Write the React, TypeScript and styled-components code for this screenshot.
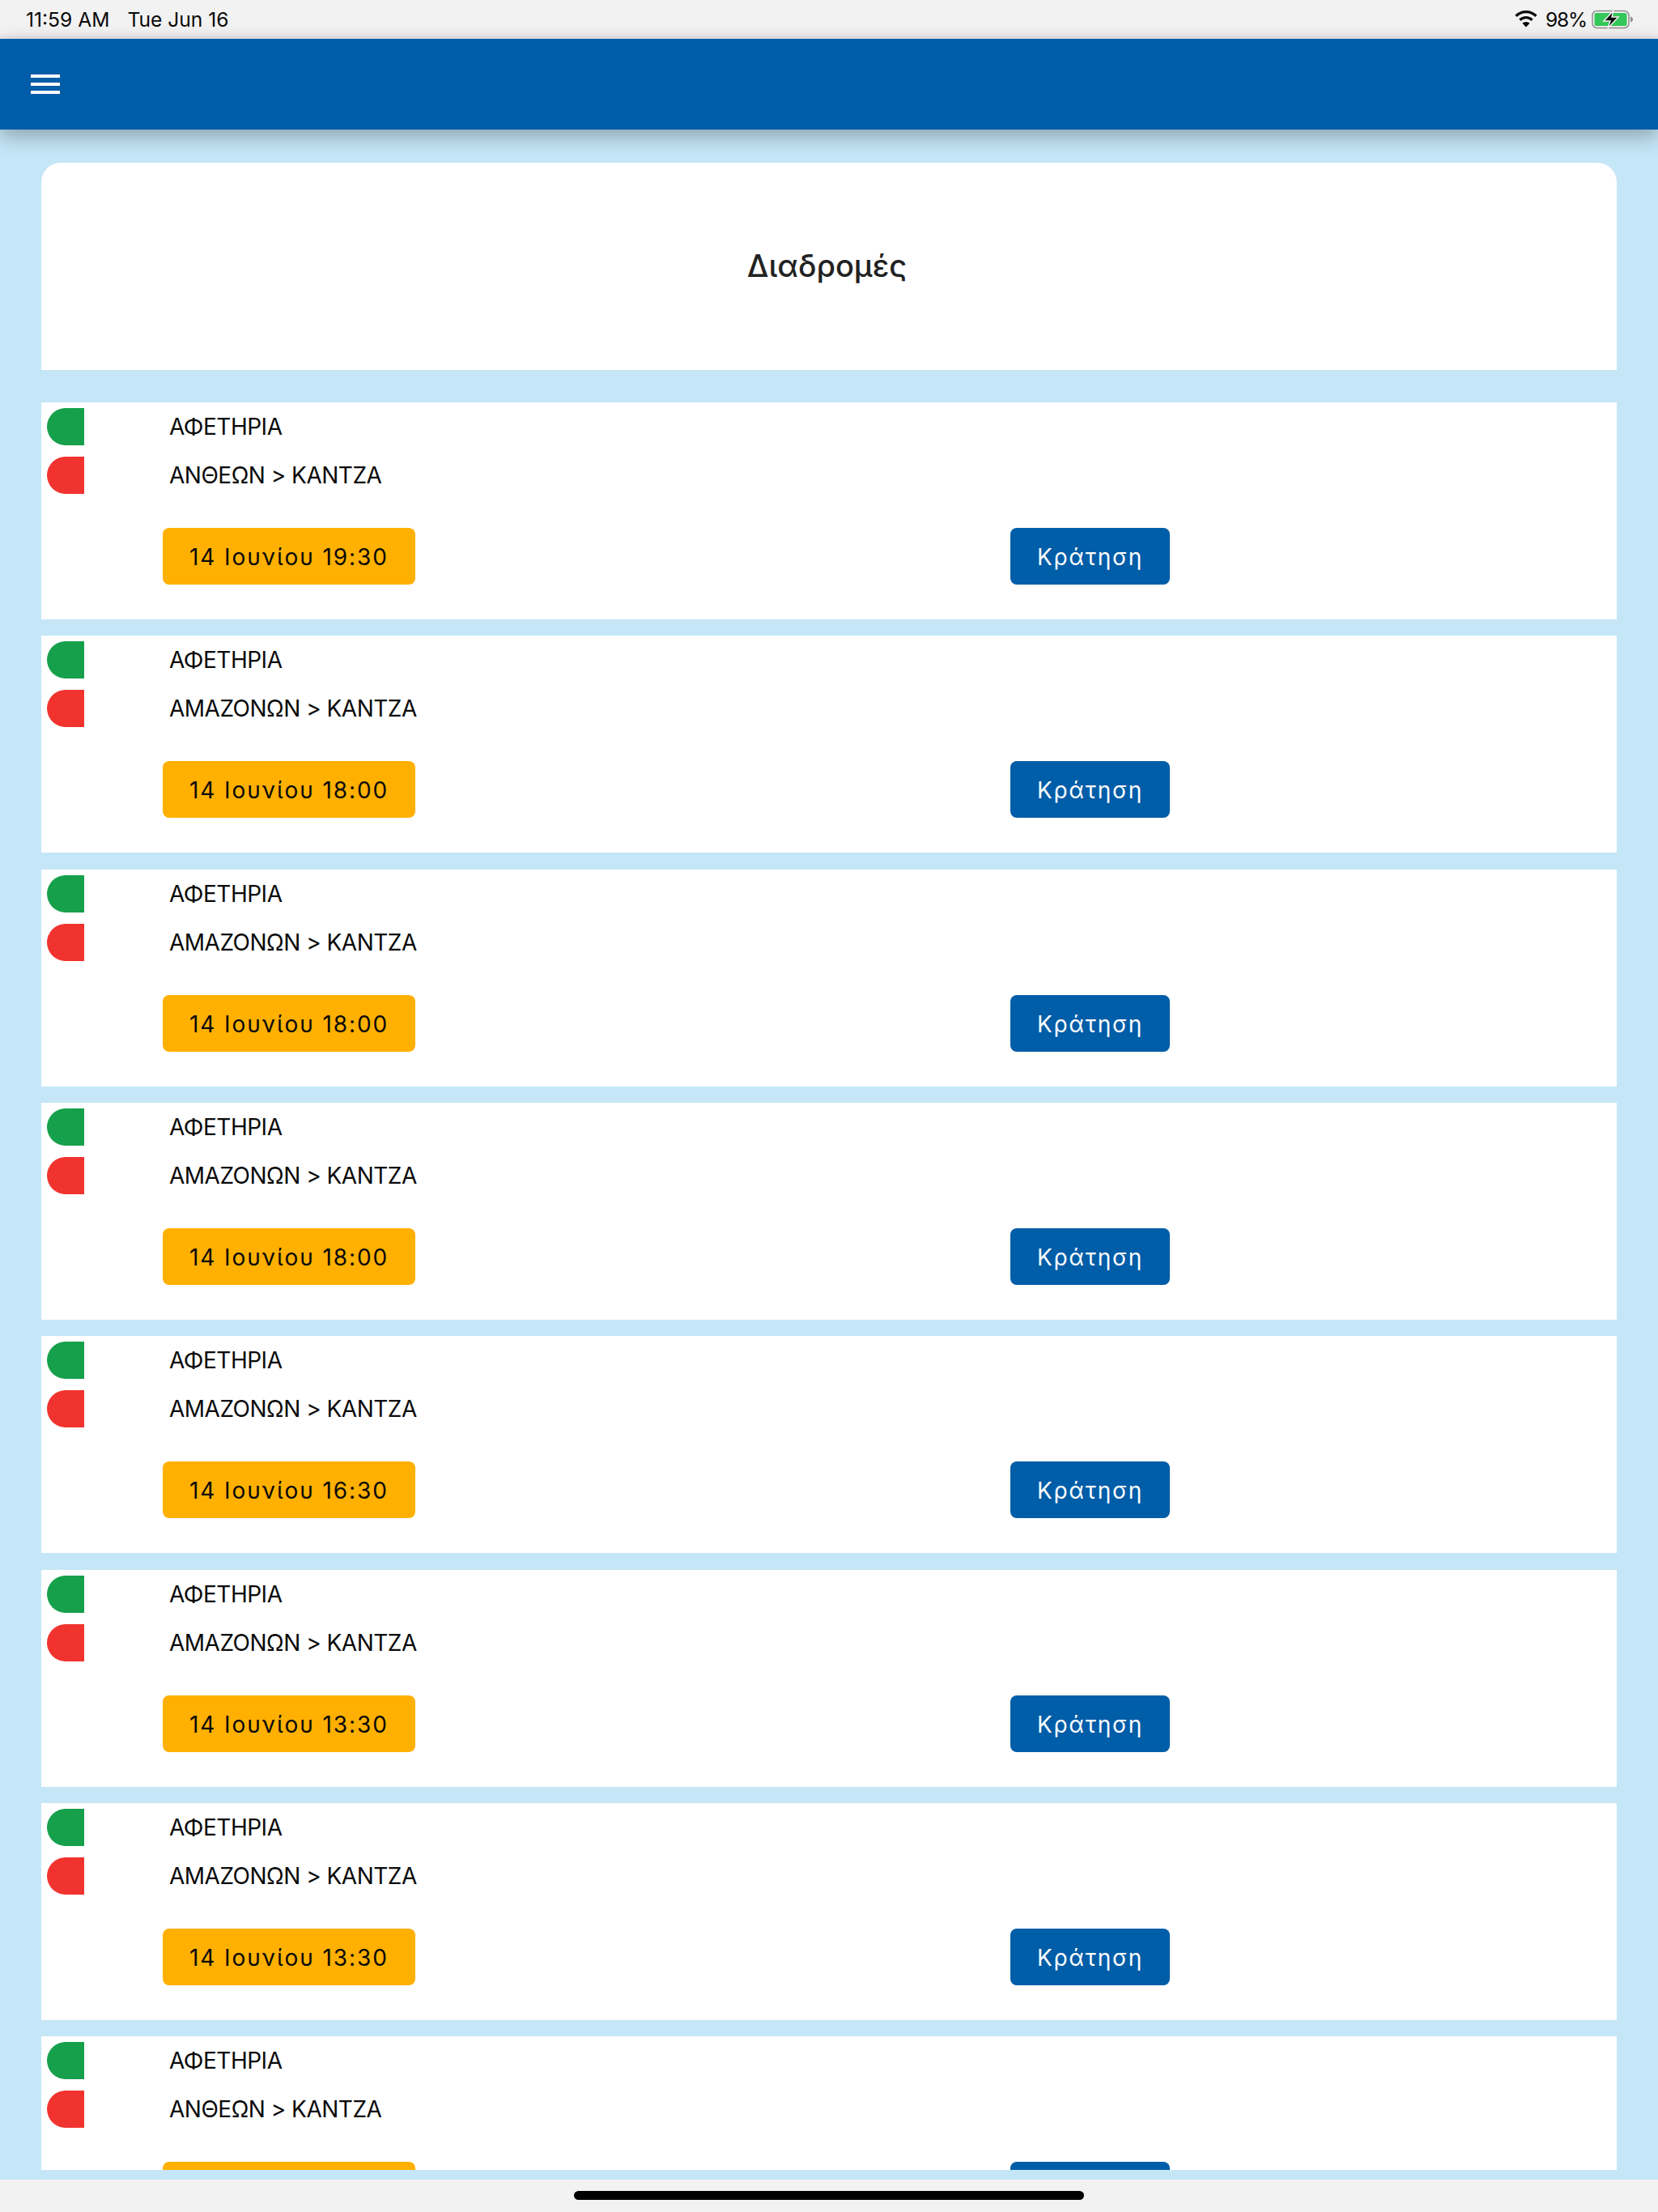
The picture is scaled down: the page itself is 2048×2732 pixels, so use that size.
import { createGlobalStyle } from "styled-components"
import styled from "styled-components"

const GlobalStyle = createGlobalStyle`
    html, body {
        margin: 0;
        padding: 0;
        background: #f2f2f2;
        font-family: Inter, "Noto Sans", sans-serif;
    }
    `
const Page = styled.div`
    width: 2048px;
    height: 2732px;
    display: flex;
    flex-direction: column;
    overflow: hidden;
    background: #c5e6f7;
    `
const StatusBar = styled.div`
    height: 48px;
    flex: none;
    display: flex;
    align-items: center;
    justify-content: space-between;
    padding: 0 30px 1px 32px;
    box-sizing: border-box;
    background: linear-gradient(#f2f2f2 85%, #e6e6e6);
    color: #0a0a0a;
    font-size: 24.6px;
    `
const StatusGroup = styled.div`
    display: flex;
    align-items: center;
    gap: ${(props: { $gap: number }) => props.$gap}px;
    `
const BatteryLevel = styled.span`
    margin: 0 -1px 0 3px;
    letter-spacing: -1.2px;
    `
const Header = styled.header`
    height: 112px;
    flex: none;
    display: flex;
    align-items: center;
    padding-left: 38px;
    background: #005da8;
    box-shadow: 0 8px 24px rgba(0, 0, 0, 0.3);
    position: relative;
    `
const Content = styled.main`
    height: 2520px;
    flex: none;
    padding: 41px 51px 0;
    box-sizing: border-box;
    overflow: hidden;
    display: flex;
    flex-direction: column;
    gap: 20.35px;
    `
const TitleCard = styled.section`
    height: 256px;
    flex: none;
    margin-bottom: 19.65px;
    padding: 0 5px 2px 0;
    box-sizing: border-box;
    display: flex;
    align-items: center;
    justify-content: center;
    background: #fff;
    border-radius: 24px 24px 0 0;
    `
const Title = styled.h1`
    margin: 0;
    font-size: 38px;
    font-weight: 500;
    color: #222;
    `
const RouteCard = styled.article`
    height: 268px;
    flex: none;
    padding-top: 7px;
    box-sizing: border-box;
    background: #fff;
    `
const StopRow = styled.div`
    height: 46px;
    margin-bottom: 14px;
    display: flex;
    align-items: center;
    padding-left: 7px;
    `
const Pill = styled.span<{ $color: string }>`
    width: 46px;
    height: 46px;
    flex: none;
    border-radius: 23px 0 0 23px;
    background: ${(props) => props.$color};
    `
const StopLabel = styled.span`
    margin-left: 105px;
    font-size: 28px;
    letter-spacing: -0.5px;
    color: #0a0a0a;
    `
const ActionRow = styled.div`
    display: grid;
    grid-template-columns: 1047px auto;
    justify-content: start;
    padding: 28px 0 0 150px;
    `
const ActionButton = styled.button<{ $primary?: boolean }>`
    height: 70px;
    justify-self: start;
    padding: 2px 33px 0;
    border: 0;
    border-radius: 8px;
    font-family: inherit;
    font-size: 28px;
    letter-spacing: ${(props) => (props.$primary ? "1.7px" : "1.9px")};
    background: ${(props) => (props.$primary ? "#005da8" : "#ffb000")};
    color: ${(props) => (props.$primary ? "#fff" : "#0a0a0a")};
    `
const BottomBar = styled.div`
    flex: 1;
    margin-top: 12px;
    display: flex;
    justify-content: center;
    padding-top: 14px;
    background: #f2f2f2;
    `
const HomeIndicator = styled.div`
    width: 630px;
    height: 11px;
    border-radius: 6px;
    background: #000;
    `

const MenuIcon = () => (
    <svg width="36" height="24" viewBox="0 0 36 24" fill="#fff">
        <rect y="0" width="36" height="4" />
        <rect y="10" width="36" height="4" />
        <rect y="20" width="36" height="4" />
    </svg>
)

const WifiIcon = () => (
    <svg width="28" height="21" viewBox="0 0 28 21" fill="#0a0a0a">
        <path d="M14 0C8.8 0 4 2 .4 5.5l2.3 2.4C5.7 5 9.7 3.3 14 3.3s8.3 1.7 11.3 4.6l2.3-2.4C24 2 19.2 0 14 0z" />
        <path d="M14 7c-3.3 0-6.4 1.3-8.7 3.5l2.4 2.4C9.4 11.3 11.6 10.3 14 10.3s4.6 1 6.3 2.6l2.4-2.4C20.4 8.3 17.3 7 14 7z" />
        <path d="M14 14c-1.8 0-3.3.7-4.5 1.8L14 20.5l4.5-4.7C17.3 14.7 15.8 14 14 14z" />
    </svg>
)

const BatteryIcon = () => (
    <svg width="52" height="24" viewBox="0 0 52 24">
        <rect x="1" y="1.5" width="45" height="21" rx="5.5" fill="none" stroke="#8e8e8e" strokeWidth="1.5" />
        <rect x="3.5" y="4" width="40" height="16" rx="2.5" fill="#34c759" />
        <path d="M48 8.5c1.8.6 3 1.9 3 3.5s-1.200 2.900-3 3.500z" fill="#8e8e8e" />
        <path d="M27 1 15 14h8l-3 9 13-14h-8l2-8z" fill="#0a0a0a" stroke="#f2f2f2" strokeWidth="1.5" />
    </svg>
)

const routes = [
    { to: "ΑΝΘΕΩΝ > ΚΑΝΤΖΑ", date: "14 Ιουνίου 19:30" },
    { to: "ΑΜΑΖΟΝΩΝ > ΚΑΝΤΖΑ", date: "14 Ιουνίου 18:00" },
    { to: "ΑΜΑΖΟΝΩΝ > ΚΑΝΤΖΑ", date: "14 Ιουνίου 18:00" },
    { to: "ΑΜΑΖΟΝΩΝ > ΚΑΝΤΖΑ", date: "14 Ιουνίου 18:00" },
    { to: "ΑΜΑΖΟΝΩΝ > ΚΑΝΤΖΑ", date: "14 Ιουνίου 16:30" },
    { to: "ΑΜΑΖΟΝΩΝ > ΚΑΝΤΖΑ", date: "14 Ιουνίου 13:30" },
    { to: "ΑΜΑΖΟΝΩΝ > ΚΑΝΤΖΑ", date: "14 Ιουνίου 13:30" },
    { to: "ΑΝΘΕΩΝ > ΚΑΝΤΖΑ", date: "14 Ιουνίου 13:30" },
]

export default function App() {
    return (
        <Page>
            <GlobalStyle />
            <StatusBar>
                <StatusGroup $gap={22}>
                    <span>11:59 AM</span>
                    <span>Tue Jun 16</span>
                </StatusGroup>
                <StatusGroup $gap={7}>
                    <WifiIcon />
                    <BatteryLevel>98%</BatteryLevel>
                    <BatteryIcon />
                </StatusGroup>
            </StatusBar>
            <Header>
                <MenuIcon />
            </Header>
            <Content>
                <TitleCard>
                    <Title>Διαδρομές</Title>
                </TitleCard>
                {routes.map((route, i) => (
                    <RouteCard key={i}>
                        <StopRow>
                            <Pill $color="#16a04c" />
                            <StopLabel>ΑΦΕΤΗΡΙΑ</StopLabel>
                        </StopRow>
                        <StopRow>
                            <Pill $color="#f1332f" />
                            <StopLabel>{route.to}</StopLabel>
                        </StopRow>
                        <ActionRow>
                            <ActionButton>{route.date}</ActionButton>
                            <ActionButton $primary>Κράτηση</ActionButton>
                        </ActionRow>
                    </RouteCard>
                ))}
            </Content>
            <BottomBar>
                <HomeIndicator />
            </BottomBar>
        </Page>
    )
}
